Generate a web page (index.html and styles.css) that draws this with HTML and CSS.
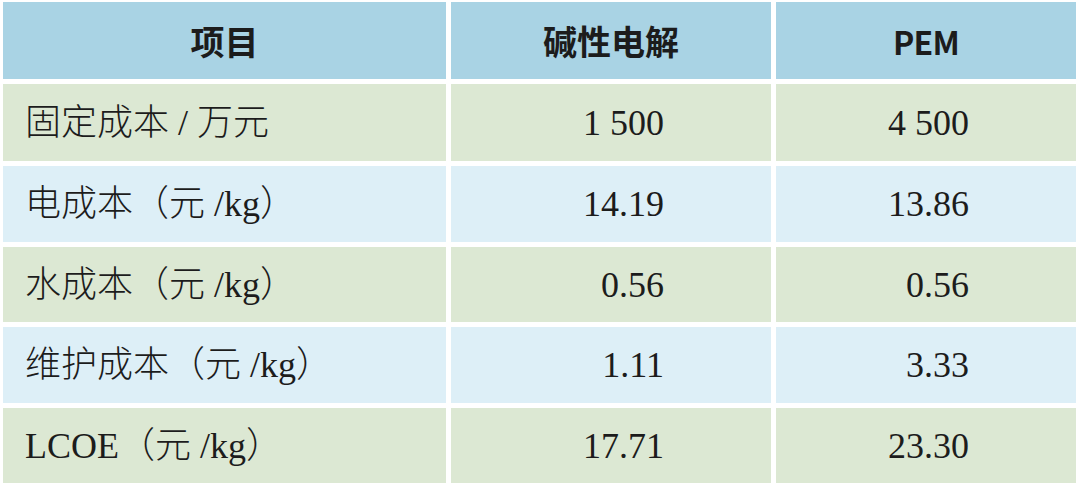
FILE: index.html
```html
<!DOCTYPE html>
<html lang="zh-CN">
<head>
<meta charset="utf-8">
<title>成本对比</title>
<link rel="stylesheet" href="styles.css">
</head>
<body>
<div class="table">
  <div class="cell head">项目</div>
  <div class="cell head">碱性电解</div>
  <div class="cell head latin">PEM</div>

  <div class="cell green label">固定成本 / 万元</div>
  <div class="cell green num">1 500</div>
  <div class="cell green num">4 500</div>

  <div class="cell blue label">电成本（元 /kg）</div>
  <div class="cell blue num">14.19</div>
  <div class="cell blue num">13.86</div>

  <div class="cell green label">水成本（元 /kg）</div>
  <div class="cell green num">0.56</div>
  <div class="cell green num">0.56</div>

  <div class="cell blue label">维护成本（元 /kg）</div>
  <div class="cell blue num">1.11</div>
  <div class="cell blue num">3.33</div>

  <div class="cell green label">LCOE（元 /kg）</div>
  <div class="cell green num">17.71</div>
  <div class="cell green num">23.30</div>
</div>
</body>
</html>
```
FILE: styles.css
```css
html, body {
  margin: 0;
  padding: 0;
  background: #ffffff;
}

.table {
  display: grid;
  grid-template-columns: 443px 320px 300px;
  grid-template-rows: 77px 77px 76px 75px 76px 75px;
  gap: 5px;
  margin: 2px 0 0 3px;
  width: 1073px;
}

.cell {
  display: flex;
  align-items: center;
  color: #1c1c1c;
  font-family: "Liberation Serif", "Times New Roman", "Noto Sans CJK SC", serif;
  font-size: 36px;
  font-weight: 400;
  line-height: 1;
  white-space: nowrap;
}

.head {
  background: #a9d3e4;
  justify-content: center;
  font-family: "Noto Sans CJK SC", sans-serif;
  font-weight: 700;
  font-size: 34px;
}

.head.latin {
  font-size: 32px;
  letter-spacing: -0.8px;
}

.green {
  background: #dce8d3;
}

.blue {
  background: #ddeff7;
}

.label {
  padding-left: 22px;
  font-weight: 300;
}

.num {
  justify-content: flex-end;
  padding-right: 107px;
}
```
